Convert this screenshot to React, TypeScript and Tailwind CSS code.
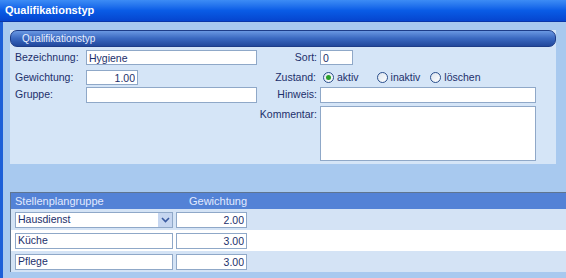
import React from 'react';

const inputCls =
  'h-[15px] bg-white border border-[#8fa8c8] text-[#1c2f6b] text-[10.5px] leading-[13px] px-[2px] outline-none';

const Radio: React.FC<{ checked?: boolean; label: string }> = ({ checked, label }) => (
  <span className="flex items-center gap-[3px]">
    <span className="w-[11px] h-[11px] rounded-full border border-[#2b4f8c] bg-gradient-to-br from-[#dce4ee] to-white flex items-center justify-center">
      {checked && <span className="w-[5px] h-[5px] rounded-full bg-[#2aa02a]" />}
    </span>
    <span>{label}</span>
  </span>
);

const App: React.FC = () => {
  const rows = [
    { name: 'Hausdienst', weight: '2.00', select: true },
    { name: 'Küche', weight: '3.00' },
    { name: 'Pflege', weight: '3.00' },
  ];

  return (
    <div className="w-[566px] h-[278px] overflow-hidden bg-[#a8c9ef] flex flex-col text-[10.5px] text-[#1c2f6b]" style={{ fontFamily: "'Liberation Sans', Arial, sans-serif" }}>
      {/* title bar */}
      <div className="h-[22px] shrink-0 bg-gradient-to-b from-[#3d8cf5] via-[#0a5ce6] to-[#0645cf] border-b border-[#0a36a8] flex items-center pl-[5px]">
        <span className="text-white font-bold text-[11px]">Qualifikationstyp</span>
      </div>

      <div className="flex-1 flex">
        <div className="w-[3px] bg-[#1c5fd8]" />
        <div className="flex-1 flex flex-col pl-[7px] pt-[8px]">
          {/* group panel */}
          <div className="w-[546px] h-[134px] bg-[#d5e5f7] flex flex-col">
            <div className="h-[17px] rounded-[7px] bg-gradient-to-b from-[#6a98e2] via-[#3a68c0] to-[#22489c] border border-[#1d3c88] flex items-center pl-[11px]">
              <span className="text-[#e8efff] text-[10px]">Qualifikationstyp</span>
            </div>

            <div className="flex flex-col pl-[5px] pt-[3px]">
              {/* row 1 */}
              <div className="flex items-center h-[15px]">
                <span className="w-[71px]">Bezeichnung:</span>
                <input className={`${inputCls} w-[171px]`} defaultValue="Hygiene" />
                <span className="w-[63px] text-right pr-[3px]">Sort:</span>
                <input className={`${inputCls} w-[33px]`} defaultValue="0" />
              </div>
              {/* row 2 */}
              <div className="flex items-center h-[15px] mt-[5px]">
                <span className="w-[71px]">Gewichtung:</span>
                <input className={`${inputCls} w-[52px] text-right`} defaultValue="1.00" />
                <span className="w-[182px] text-right pr-[4px]">Zustand:</span>
                <div className="flex items-center ml-[3px]">
                  <Radio checked label="aktiv" />
                  <span className="ml-[18px]"><Radio label="inaktiv" /></span>
                  <span className="ml-[10px]"><Radio label="löschen" /></span>
                </div>
              </div>
              {/* row 3 */}
              <div className="flex items-center h-[16px] mt-[2px]">
                <span className="w-[71px]">Gruppe:</span>
                <input className={`${inputCls} w-[171px] h-[16px]`} />
                <span className="w-[63px] text-right pr-[3px]">Hinweis:</span>
                <input className={`${inputCls} w-[216px] h-[16px]`} />
              </div>
              {/* row 4 */}
              <div className="flex items-start mt-[3px]">
                <span className="w-[305px] text-right pr-[3px] pt-[1px]">Kommentar:</span>
                <textarea className="w-[216px] h-[55px] bg-white border border-[#8fa8c8] resize-none outline-none" />
              </div>
            </div>
          </div>

          {/* table */}
          <div className="mt-[28px] border-t border-l border-[#5f7590] flex flex-col">
            <div className="h-[16px] bg-[#5382d6] text-[#e2eaff] text-[11px] flex items-center pl-[4px]">
              <span className="w-[174px]">Stellenplangruppe</span>
              <span>Gewichtung</span>
            </div>
            {rows.map((r, i) => (
              <div
                key={r.name}
                className={`h-[21px] flex items-center pl-[4px] ${i % 2 === 1 ? 'bg-white' : 'bg-[#d4e3f5]'}`}
              >
                <div className={`${inputCls} w-[158px] h-[16px] flex items-center justify-between pr-0`}>
                  <span>{r.name}</span>
                  {r.select && (
                    <span className="w-[15px] h-[14px] bg-[#c6d6f0] border-l border-white flex items-center justify-center">
                      <svg width="9" height="6" viewBox="0 0 9 6">
                        <path d="M1 1 L4.5 4.5 L8 1" stroke="#3a5aa0" strokeWidth="1.6" fill="none" />
                      </svg>
                    </span>
                  )}
                </div>
                <input className={`${inputCls} w-[71px] h-[16px] ml-[3px] text-right`} defaultValue={r.weight} />
              </div>
            ))}
          </div>
        </div>
      </div>
    </div>
  );
};

export default App;
